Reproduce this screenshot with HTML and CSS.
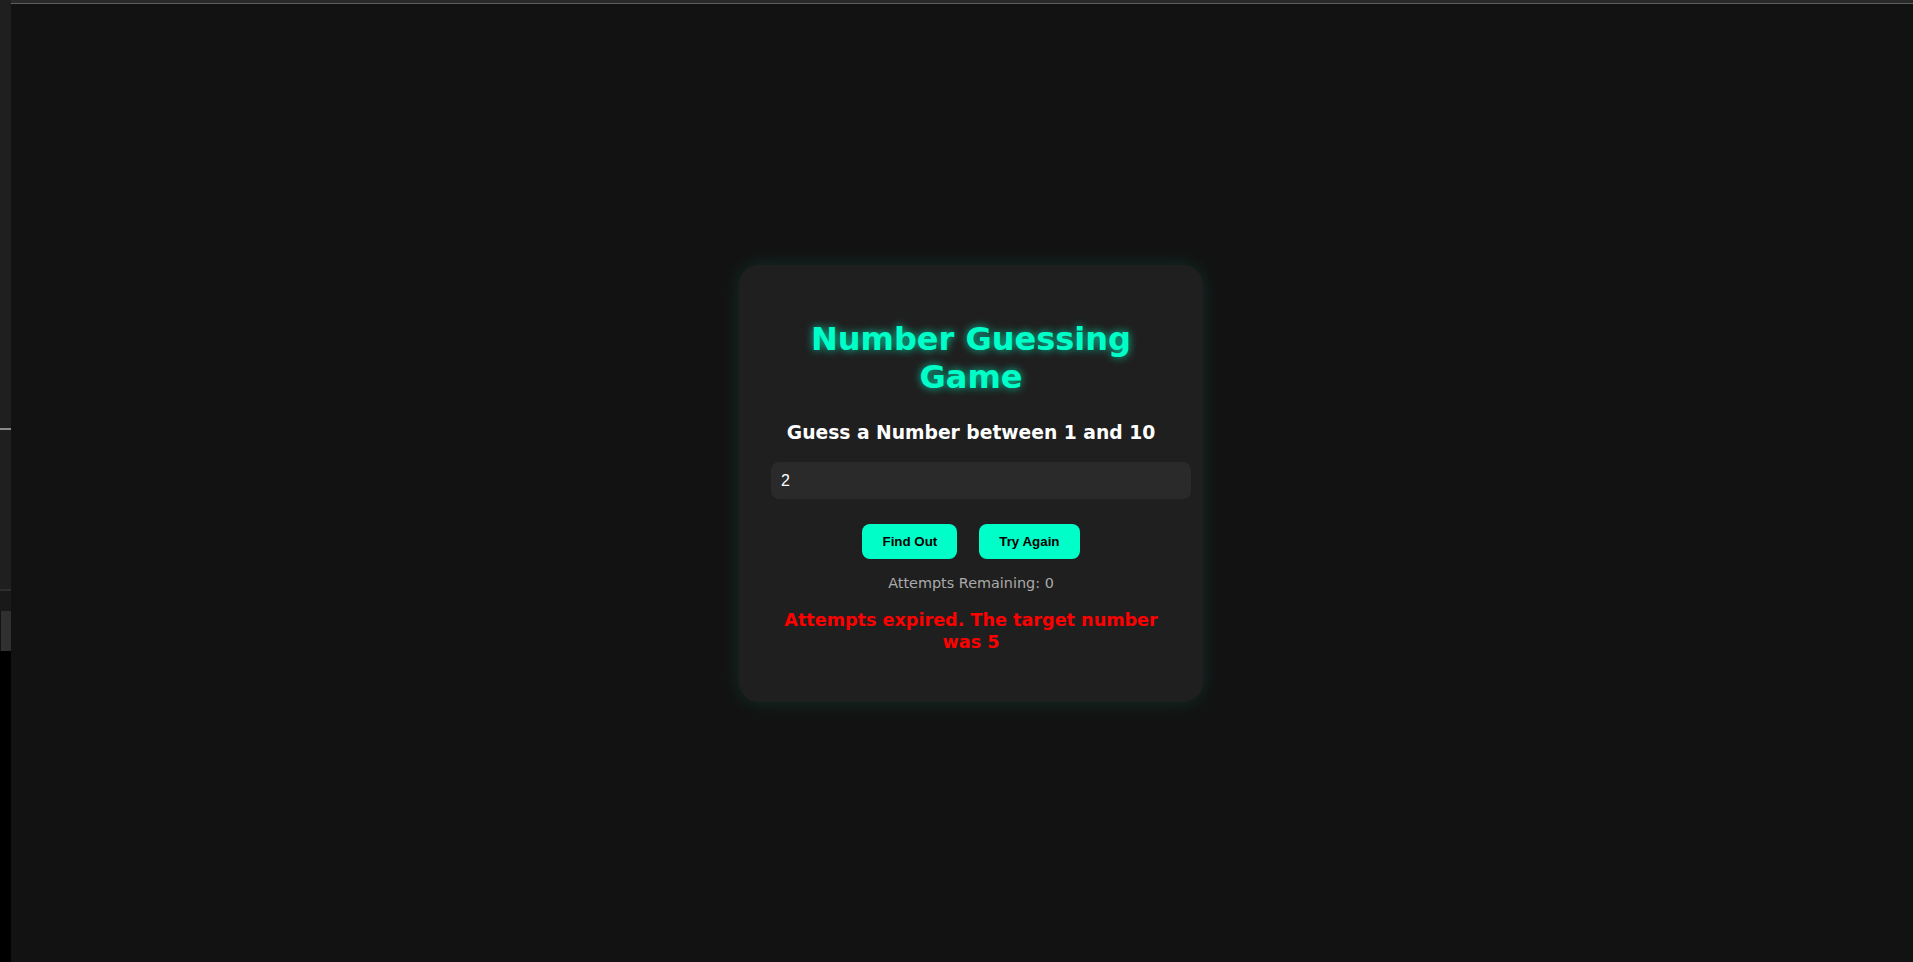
FILE: index.html
```html
<!DOCTYPE html>
<html lang="en">
<head>
<meta charset="utf-8">
<title>Number Guessing Game</title>
<link rel="stylesheet" href="styles.css">
</head>
<body>
<div class="frame">
  <aside class="strip">
    <div class="strip-top"></div>
    <div class="strip-rule"></div>
    <div class="strip-mid"></div>
    <div class="strip-sep"></div>
    <div class="strip-band"></div>
    <div class="strip-box"></div>
    <div class="strip-black"></div>
  </aside>
  <div class="viewport">
    <div class="topline"></div>
    <main class="stage">
      <section class="card">
        <h1 class="title">Number Guessing Game</h1>
        <h3 class="prompt">Guess a Number between 1 and 10</h3>
        <input class="guess" type="text" value="2">
        <div class="actions">
          <button class="btn">Find Out</button>
          <button class="btn">Try Again</button>
        </div>
        <p class="attempts">Attempts Remaining: 0</p>
        <p class="message">Attempts expired. The target number was 5</p>
      </section>
    </main>
  </div>
</div>
</body>
</html>
```
FILE: styles.css
```css
html, body {
  margin: 0;
  padding: 0;
  height: 100%;
  background: #121212;
  overflow: hidden;
}
.frame {
  display: flex;
  height: 962px;
}
.strip {
  width: 11px;
  flex: none;
  display: flex;
  flex-direction: column;
}
.strip-top { height: 428px; background: #1f1f1f; }
.strip-rule { height: 2px; background: #8a8a8a; }
.strip-mid { height: 159px; background: #1f1f1f; }
.strip-sep { height: 2px; background: #2e2e2e; }
.strip-band { height: 20px; background: #191919; }
.strip-box {
  height: 40px;
  margin-left: 1px;
  background: #303030;
}
.strip-black { flex: 1; background: #000; }
.viewport {
  flex: 1;
  display: flex;
  flex-direction: column;
}
.topline {
  height: 3px;
  background: #2a2a2a;
  border-bottom: 1px solid #5e5e5e;
  flex: none;
}
.stage {
  flex: 1;
  display: flex;
  align-items: center;
  justify-content: center;
  padding-left: 18px;
  font-family: "DejaVu Sans", Verdana, sans-serif;
}
.card {
  width: 400px;
  padding: 32px;
  background: #1f1f1f;
  border-radius: 20px;
  box-shadow: 0 0 20px rgba(0, 255, 200, 0.12);
  text-align: center;
}
.title {
  font-size: 32px;
  font-weight: bold;
  color: #00ffc8;
  text-shadow: 0 0 8px rgba(0, 255, 200, 0.75);
  margin: 23px 0 0;
  line-height: 38px;
}
.prompt {
  font-size: 18.72px;
  font-weight: bold;
  color: #ffffff;
  line-height: 22px;
  margin: 26.5px 0 17.5px;
}
.guess {
  display: block;
  width: 100%;
  padding: 10px;
  margin: 0 0 25px;
  border: none;
  border-radius: 8px;
  background: #2a2a2a;
  color: #ffffff;
  font-family: "Liberation Sans", Arial, sans-serif;
  font-size: 16px;
  line-height: 17px;
  outline: none;
}
.actions {
  display: flex;
  justify-content: center;
  gap: 22px;
}
.btn {
  padding: 10px 20px;
  border: none;
  border-radius: 8px;
  background: #00ffc8;
  color: #000;
  font-family: "Liberation Sans", Arial, sans-serif;
  font-size: 13.333px;
  font-weight: bold;
  line-height: 15px;
}
.attempts {
  color: #aaaaaa;
  font-size: 14.4px;
  line-height: 17px;
  margin: 16.5px 0 0;
}
.message {
  color: #ff0000;
  font-size: 17.6px;
  font-weight: bold;
  line-height: 22px;
  margin: 16.5px 0 17px;
}
```
